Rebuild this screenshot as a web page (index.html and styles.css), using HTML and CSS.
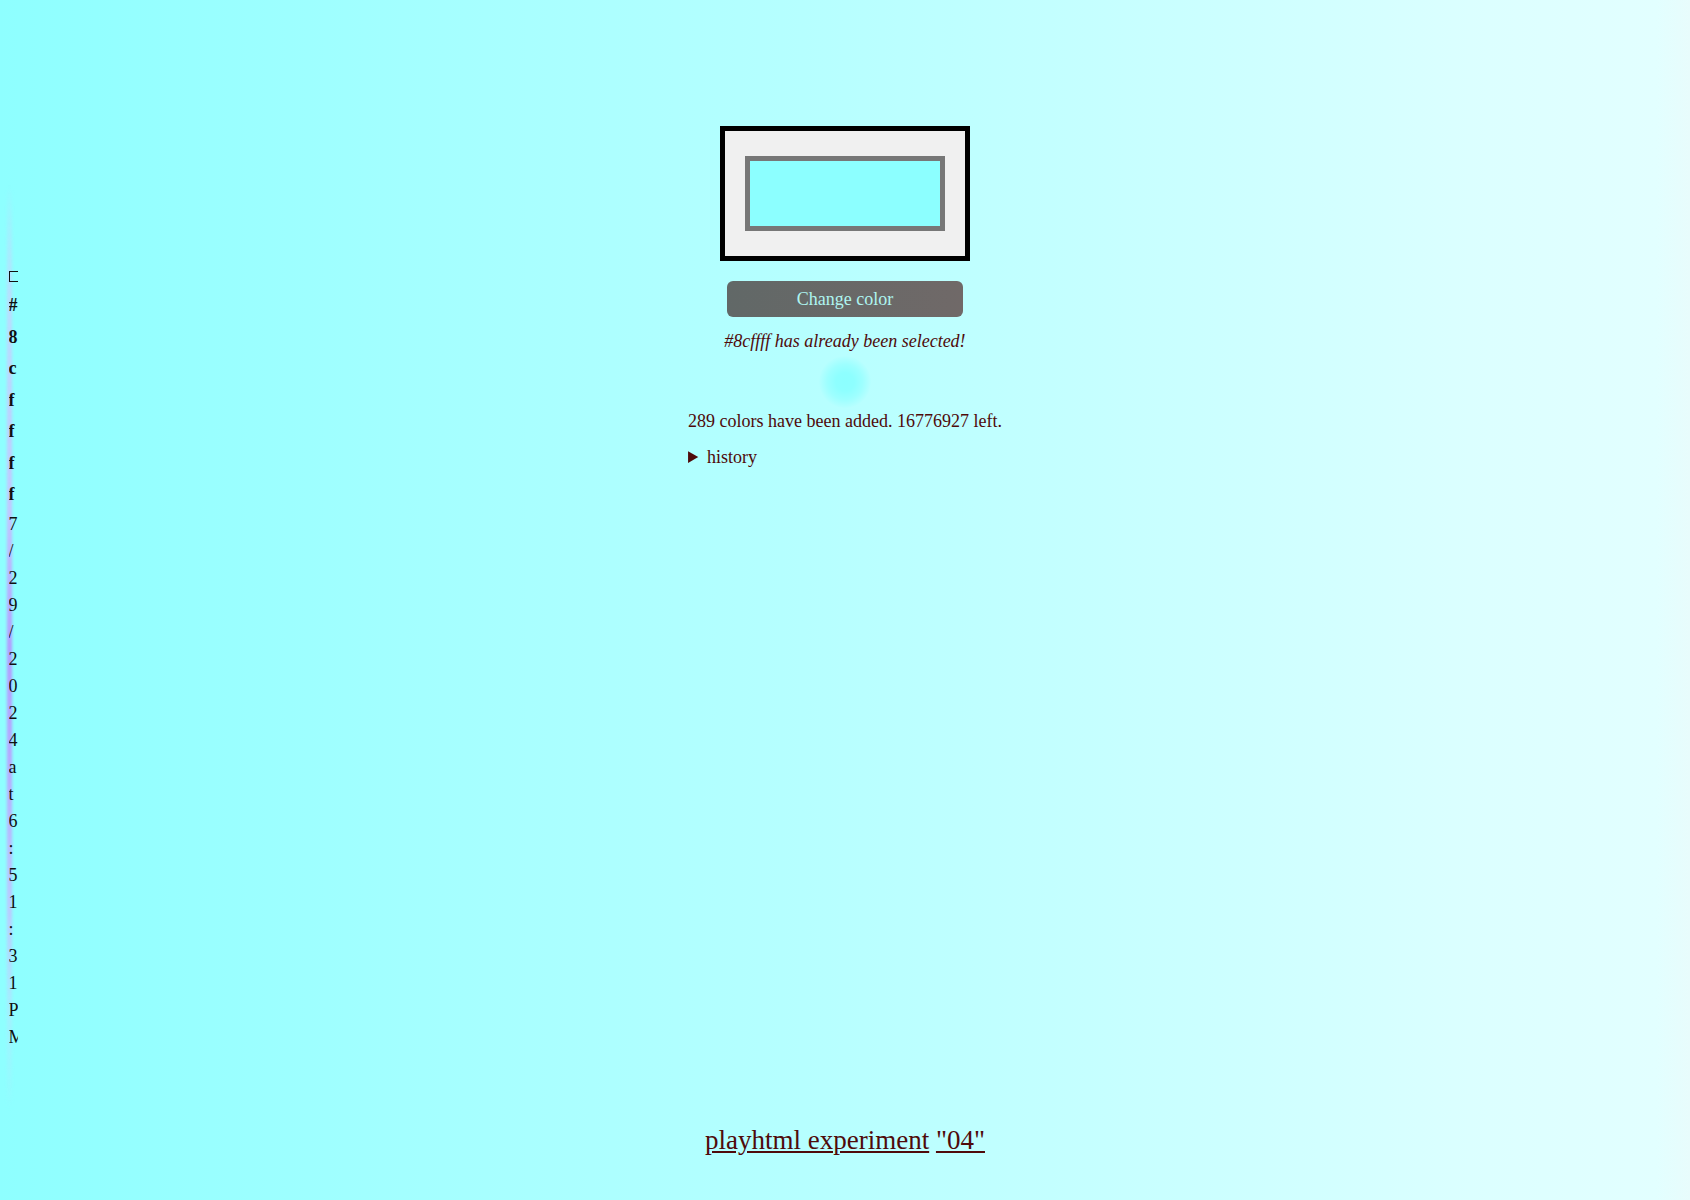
FILE: index.html
```html
<!DOCTYPE html>
<html lang="en">
<head>
<meta charset="utf-8">
<title>playhtml experiment 04</title>
<link rel="stylesheet" href="styles.css">
</head>
<body>
  <aside class="strip">
    <div class="strip-inner">
      <span class="swatch"></span>
      <div class="hex">#8cffff</div>
      <div class="date">7/29/2024 at 6:51:31 PM</div>
    </div>
  </aside>
  <main class="main">
    <div class="frame"><div class="canvas"></div></div>
    <button class="change">Change color</button>
    <p class="notice">#8cffff has already been selected!</p>
    <div class="orb"></div>
    <div class="stats">
      <p class="count">289 colors have been added. 16776927 left.</p>
      <details class="history"><summary>history</summary></details>
    </div>
    <footer class="footer"><a href="#">playhtml experiment</a> <a href="#">"04"</a></footer>
  </main>
  <div class="spacer"></div>
</body>
</html>
```

FILE: styles.css
```css
html, body {
  margin: 0;
  padding: 0;
}
body {
  height: 1200px;
  overflow: hidden;
  display: grid;
  grid-template-columns: 17px 1fr 17px;
  font-family: "Liberation Serif", "Times New Roman", serif;
  font-size: 18px;
  color: #4f0a0a;
  background: linear-gradient(to right, #8effff 0%, #a4ffff 25%, #b8ffff 50%, #ccffff 72%, #dcffff 88%, #e2ffff 98%, #e8fcfc 100%);
}
.strip {
  position: relative;
  padding-left: 8.5px;
}
.strip::before {
  content: "";
  position: absolute;
  left: 7px;
  top: 185px;
  width: 5px;
  height: 925px;
  filter: blur(1.5px);
  background: linear-gradient(to bottom,
    rgba(190, 220, 255, 0) 0%,
    rgba(196, 214, 255, 0.8) 12%,
    #c4c4ff 35%,
    #b498ff 50%,
    #b8a4ff 62%,
    #bcc8ff 78%,
    rgba(176, 232, 255, 0.6) 90%,
    rgba(176, 240, 255, 0) 100%);
}
.strip-inner {
  position: relative;
  width: 9px;
  overflow: hidden;
  padding-top: 271px;
  color: #111;
  word-break: break-all;
  line-break: anywhere;
}
.swatch {
  display: block;
  width: 14px;
  height: 11px;
  box-sizing: border-box;
  border: 1px solid #111;
  margin-bottom: 8px;
}
.hex {
  font-weight: bold;
  line-height: 31.5px;
}
.date {
  line-height: 27px;
}
.main {
  height: 1200px;
  box-sizing: border-box;
  padding: 126px 0 43.6px;
  display: flex;
  flex-direction: column;
  align-items: center;
}
.frame {
  width: 250px;
  box-sizing: border-box;
  border: 5px solid #000;
  background: #f0f0f0;
  padding: 25px 20px;
}
.canvas {
  width: 200px;
  height: 75px;
  box-sizing: border-box;
  border: 5px solid #777;
  background: #8cffff;
}
.change {
  margin-top: 20px;
  width: 236px;
  height: 36px;
  border: none;
  border-radius: 6px;
  background: linear-gradient(to right, #616867, #706968);
  color: #aef5f0;
  font-family: "Liberation Serif", "Times New Roman", serif;
  font-size: 18px;
  padding: 0;
}
.notice {
  margin: 14.4px 0 0;
  font-style: italic;
  line-height: 21px;
}
.orb {
  margin-top: 3.6px;
  width: 52px;
  height: 52px;
  border-radius: 50%;
  background: radial-gradient(circle, #8cffff 0%, #8effff 25%, rgba(140, 255, 255, 0.6) 48%, rgba(140, 255, 255, 0) 72%);
}
.stats {
  margin-top: 3.4px;
}
.count {
  margin: 0;
  line-height: 21px;
}
.history {
  margin-top: 15px;
  line-height: 21px;
}
.history summary {
  cursor: pointer;
}
.footer {
  margin-top: auto;
  font-size: 27px;
  line-height: 31px;
}
.footer a {
  color: #4f0a0a;
}
```
